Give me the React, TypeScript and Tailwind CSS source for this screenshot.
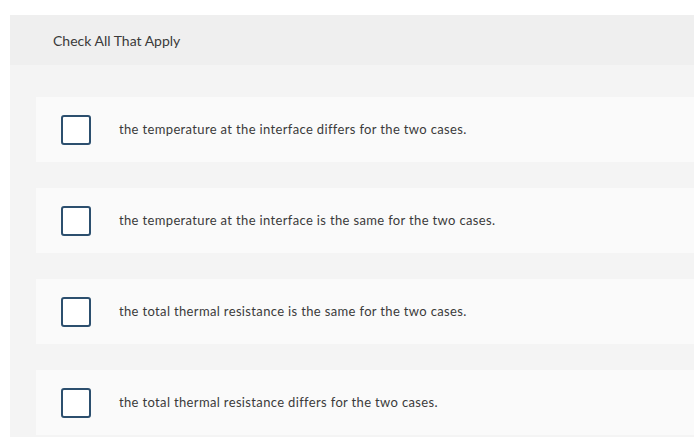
import React from 'react';

const options = [
  'the temperature at the interface differs for the two cases.',
  'the temperature at the interface is the same for the two cases.',
  'the total thermal resistance is the same for the two cases.',
  'the total thermal resistance differs for the two cases.',
];

const App: React.FC = () => {
  return (
    <div className="w-[694px] h-[437px] bg-white pt-[15px] pl-[10px] overflow-hidden font-['Lato',sans-serif]">
      <div className="bg-[#f4f4f4] h-full">
        <div className="h-[50px] bg-[#efefef] flex items-center pl-[43px]">
          <h2 className="text-[14px] text-[#3a3a3a] tracking-[0px]">Check All That Apply</h2>
        </div>
        <div className="pt-[32px] pl-[26px] flex flex-col gap-[26px]">
          {options.map((text) => (
            <label key={text} className="h-[65px] bg-[#fafafa] flex items-center pl-[25px] cursor-pointer">
              <span className="w-[30px] h-[30px] shrink-0 rounded-[3px] border-2 border-[#2c4f6e] bg-white" />
              <span className="ml-[28px] text-[13px] text-[#3a3a3a] tracking-[0.35px]">{text}</span>
            </label>
          ))}
        </div>
      </div>
    </div>
  );
};

export default App;
